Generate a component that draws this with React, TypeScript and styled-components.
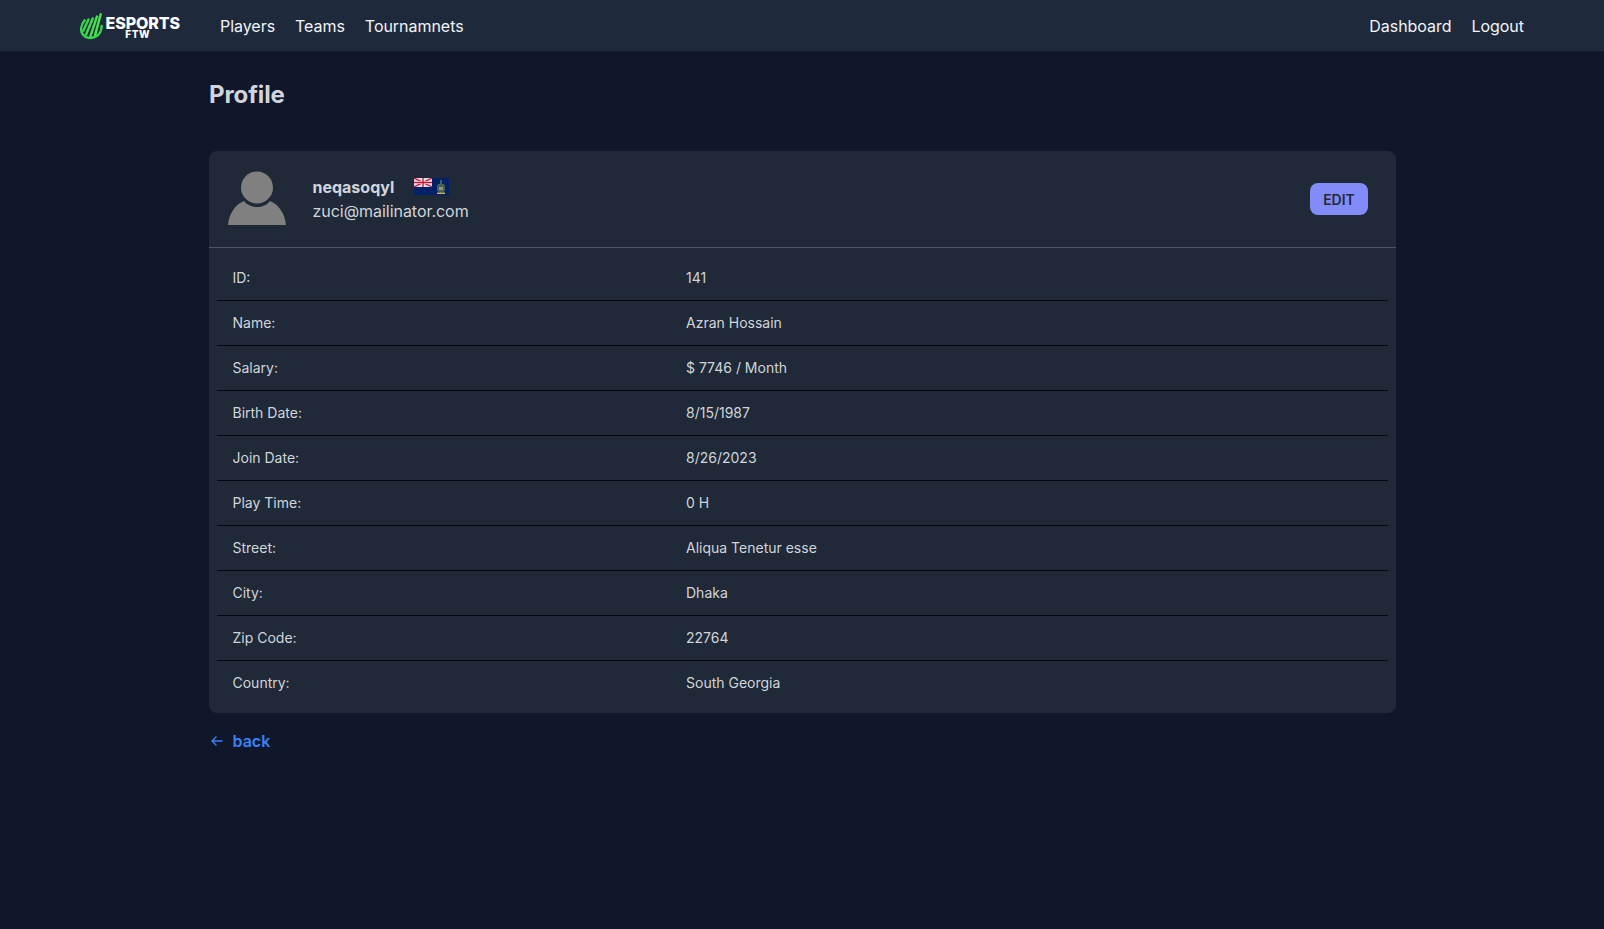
import React from "react";
import styled, { createGlobalStyle } from "styled-components";

const Global = createGlobalStyle`
  html, body { margin: 0; padding: 0; background: #10172a; }
  body { font-family: Inter, "Liberation Sans", sans-serif; min-height: 929px; }
`;
const Nav = styled.nav`
  height: 51px; background: #1e293b; display: flex; align-items: center;
  padding: 0 80px; justify-content: space-between; box-sizing: border-box;
`;
const NavLeft = styled.div`display: flex; align-items: center;`;
const Logo = styled.div`display: flex; align-items: center; width: 100px; margin-right: 40px; gap: 3px;`;
const LogoWords = styled.div`display: flex; flex-direction: column; align-items: center; color: #fff; font-weight: 800; margin-top: 5px;`;
const LogoTop = styled.span`font-size: 16px; line-height: 13px; letter-spacing: -0.1px;`;
const LogoBottom = styled.span`font-size: 10px; line-height: 9px; letter-spacing: 0.6px; margin-right: 10px;`;
const NavLinks = styled.div`display: flex; gap: 20px;`;
const NavLink = styled.a`color: #f1f5f9; font-size: 16px; line-height: 24px; letter-spacing: -0.04px;`;
const Main = styled.main`width: 1187px; margin-left: 209px;`;
const Title = styled.h1`
  margin: 0; padding-top: 26px; height: 100px; box-sizing: border-box; font-size: 24px; line-height: 36px; font-weight: 700; color: #d1d5db; letter-spacing: -0.1px;
`;
const Card = styled.section`background: #1f2937; border-radius: 8px; height: 562px;`;
const CardHead = styled.div`
  height: 97px; box-sizing: border-box; border-bottom: 1px solid #4b5563;
  display: flex; align-items: center; padding: 0 28px 0 19px;
`;
const Avatar = styled.svg`width: 58px; height: 54px; display: block; margin-top: -2px;`;
const Who = styled.div`margin-left: 26.5px; flex: 1;`;
const NameRow = styled.div`display: flex; align-items: center; gap: 20px; height: 24px;`;
const Username = styled.span`font-weight: 700; font-size: 16px; color: #d1d5db;`;
const Flag = styled.svg`width: 35px; height: 17px; display: block; margin-top: -2px;`;
const Email = styled.div`font-size: 16px; line-height: 24px; color: #d1d5db; letter-spacing: -0.04px;`;
const EditButton = styled.button`
  width: 58px; height: 32px; border: 0; border-radius: 8px; background: #818cf8;
  color: #1f2937; font: 600 14px Inter, sans-serif; padding: 0;
`;
const Rows = styled.div`padding: 8px 8px 0;`;
const Row = styled.div`
  display: flex; align-items: center; height: 45px; box-sizing: border-box;
  border-bottom: 1px solid #030712; padding: 0 0 1px 15.5px; font-size: 14px; color: #d1d5db;
  &:last-child { border-bottom: 0; padding-bottom: 2px; }
`;
const Label = styled.span`width: 453.5px;`;
const Value = styled.span``;
const Back = styled.a`
  display: flex; align-items: center; gap: 8.5px; margin-top: 16px; height: 24px;
  color: #3b82f6; font-size: 16px; font-weight: 600;
`;
const BackIcon = styled.svg`width: 14px; height: 14px; margin-left: 1px;`;

const rows: [string, string][] = [
  ["ID:", "141"], ["Name:", "Azran Hossain"], ["Salary:", "$ 7746 / Month"],
  ["Birth Date:", "8/15/1987"], ["Join Date:", "8/26/2023"], ["Play Time:", "0 H"],
  ["Street:", "Aliqua Tenetur esse"], ["City:", "Dhaka"], ["Zip Code:", "22764"], ["Country:", "South Georgia"],
];

export default function App() {
  return (
    <>
      <Global />
      <Nav>
        <NavLeft>
          <Logo>
            <svg width="24" height="28" viewBox="0 0 24 28" fill="none" strokeLinecap="round" strokeWidth="2.6">
              <path d="M5 8C1 13 0 19 3 23c3 4 9 5 14 2 4-2 6-7 6-11" stroke="#34d64a" />
              <path d="M3.5 19 9 7" stroke="#34d64a" />
              <path d="M6.5 23 13.5 6" stroke="#3fdc4a" />
              <path d="M11 25 18 4" stroke="#45e04a" />
              <path d="M16 24 22 1.5" stroke="#4fe04a" />
            </svg>
            <LogoWords>
              <LogoTop>ESPORTS</LogoTop>
              <LogoBottom>FTW</LogoBottom>
            </LogoWords>
          </Logo>
          <NavLinks>
            <NavLink>Players</NavLink>
            <NavLink>Teams</NavLink>
            <NavLink>Tournamnets</NavLink>
          </NavLinks>
        </NavLeft>
        <NavLinks>
          <NavLink>Dashboard</NavLink>
          <NavLink>Logout</NavLink>
        </NavLinks>
      </Nav>
      <Main>
        <Title>Profile</Title>
        <Card>
          <CardHead>
            <Avatar viewBox="0 0 58 54">
              <circle cx="29" cy="16.5" r="16" fill="#808080" />
              <path d="M0 54C1 42 8 33 16 30c3 4 8 6 13 6s10-2 13-6c8 3 15 12 16 24Z" fill="#808080" />
            </Avatar>
            <Who>
              <NameRow>
                <Username>neqasoqyl</Username>
                <Flag viewBox="0 0 35 17">
                  <rect width="35" height="17" rx="1" fill="#012169" />
                  <rect width="18" height="9" fill="#d8d8e8" />
                  <path d="M0 0l18 9M18 0L0 9" stroke="#c8102e" strokeWidth="1.2" />
                  <path d="M9 0v9M0 4.5h18" stroke="#fff" strokeWidth="2.6" />
                  <path d="M9 0v9M0 4.5h18" stroke="#c8102e" strokeWidth="1.4" />
                  <path d="M23 8l1-2h2V2h2v4h2l1 2v5l-4 2-4-2Z" fill="#4a5f58" />
                  <rect x="25" y="9" width="4" height="3" fill="#8f9a6a" />
                  <rect x="23" y="14.5" width="8" height="1.5" fill="#c9b458" />
                </Flag>
              </NameRow>
              <Email>zuci@mailinator.com</Email>
            </Who>
            <EditButton>EDIT</EditButton>
          </CardHead>
          <Rows>
            {rows.map(([k, v]) => (
              <Row key={k}><Label>{k}</Label><Value>{v}</Value></Row>
            ))}
          </Rows>
        </Card>
        <Back>
          <BackIcon viewBox="0 0 14 14" fill="none" stroke="#3b82f6" strokeWidth="1.3">
            <path d="M12.5 7H2M6.5 2.5 2 7l4.5 4.5" />
          </BackIcon>
          back
        </Back>
      </Main>
    </>
  );
}
